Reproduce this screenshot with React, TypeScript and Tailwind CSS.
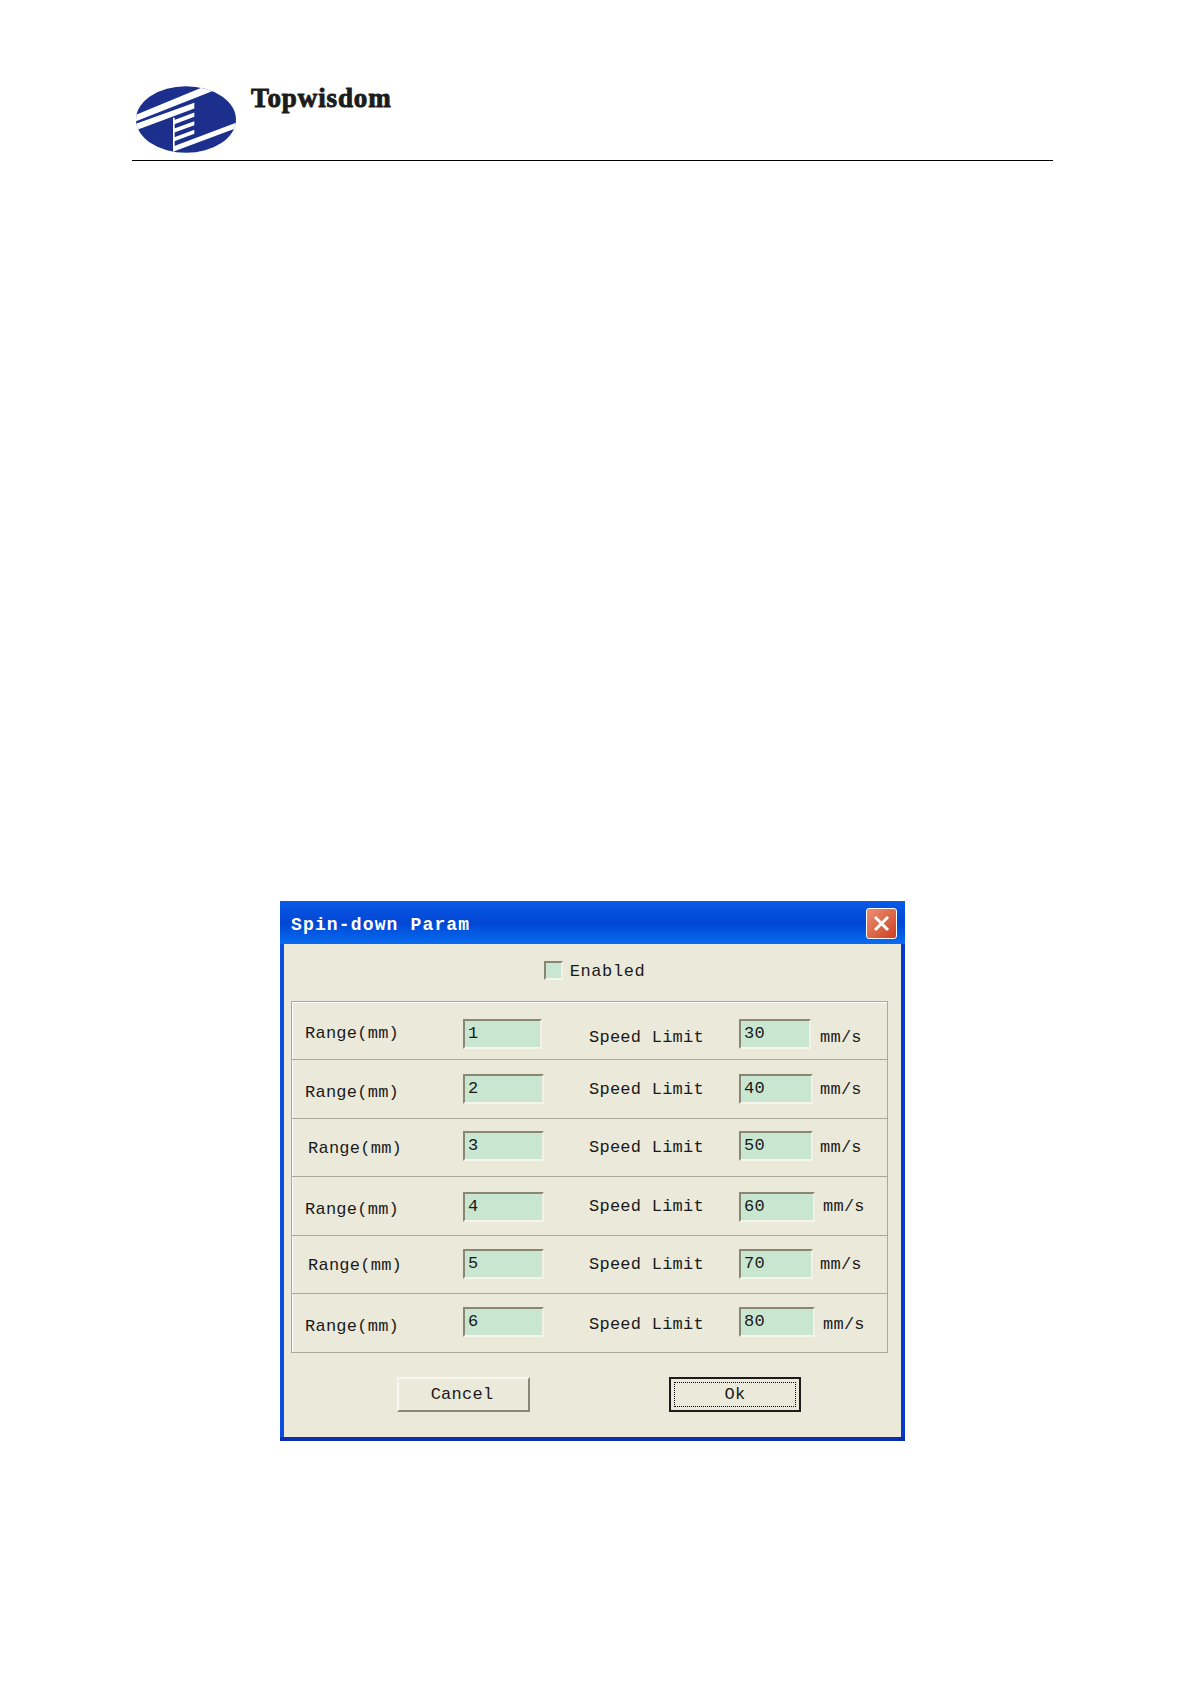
const rows = [
  { n: '1', v: '30', row: 'h-[57px]', label: 'ml-[13px] mt-[22px]', box: 'mt-[17px] w-[79px]', speed: 'mt-[26px]', box2: 'mt-[17px] w-[72px]', unit: 'ml-[9px] mt-[26px]' },
  { n: '2', v: '40', row: 'h-[59px]', label: 'ml-[13px] mt-[23px]', box: 'mt-[14px] w-[81px]', speed: 'mt-[20px]', box2: 'mt-[14px] w-[74px]', unit: 'ml-[7px] mt-[20px]' },
  { n: '3', v: '50', row: 'h-[58px]', label: 'ml-[16px] mt-[20px]', box: 'mt-[12px] w-[81px]', speed: 'mt-[19px]', box2: 'mt-[12px] w-[74px]', unit: 'ml-[7px] mt-[19px]' },
  { n: '4', v: '60', row: 'h-[59px]', label: 'ml-[13px] mt-[23px]', box: 'mt-[15px] w-[81px]', speed: 'mt-[20px]', box2: 'mt-[15px] w-[76px]', unit: 'ml-[8px] mt-[20px]' },
  { n: '5', v: '70', row: 'h-[58px]', label: 'ml-[16px] mt-[20px]', box: 'mt-[13px] w-[81px]', speed: 'mt-[19px]', box2: 'mt-[13px] w-[74px]', unit: 'ml-[7px] mt-[19px]' },
  { n: '6', v: '80', row: 'h-[59px]', label: 'ml-[13px] mt-[23px]', box: 'mt-[13px] w-[81px]', speed: 'mt-[21px]', box2: 'mt-[13px] w-[76px]', unit: 'ml-[8px] mt-[21px]' },
]

function Field ({ value, className }: { value: string, className: string }) {
  return (
    <div className={`h-[30px] bg-[#c9e6d0] border-2 border-t-[#8a8674] border-l-[#8a8674] border-r-[#f3f1e6] border-b-[#f6f5ec] pl-[3px] text-[17px] leading-[25px] ${className}`}>
      {value}
    </div>
  )
}

function Logo () {
  return (
    <svg width="100" height="67" viewBox="0 0 300 200" className="shrink-0 mt-[1px]">
      <defs>
        <clipPath id="logo-oval">
          <ellipse cx="150" cy="100" rx="150" ry="100" />
        </clipPath>
      </defs>
      <ellipse cx="150" cy="100" rx="150" ry="100" fill="#1c2f8c" />
      <g clipPath="url(#logo-oval)" fill="#fff">
        <path d="M0 86 L207 0 L232 14 L0 105 Z" />
        <path d="M0 113 L175 50 L175 67 L0 132 Z" />
        <path d="M113 102 L175 79 L175 92 L113 115 Z" />
        <path d="M113 128 L175 105 L175 117 L113 140 Z" />
        <path d="M113 154 L175 131 L175 143 L113 166 Z" />
        <path d="M113 180 L300 110 L300 126 L113 196 Z" />
        <path d="M111 95 L116 95 L116 196 L111 196 Z" />
      </g>
    </svg>
  )
}

export default function App () {
  return (
    <div className="min-h-[1684px] w-[1191px] bg-white font-['Liberation_Mono',monospace] text-[#1a1a1a] tracking-[0.25px]">
      <div className="pl-[132px] pt-[85px] w-[1053px]">
        <div className="flex border-b border-black h-[76px] pl-[4px]">
          <Logo />
          <div className="ml-[15px] font-['Liberation_Serif',serif] font-bold text-[27px] leading-[26px] tracking-[0.9px] text-[#1c1c1c] [-webkit-text-stroke:0.9px_#1c1c1c]">Topwisdom</div>
        </div>
      </div>

      <div className="ml-[280px] mt-[740px] w-[625px] h-[540px] bg-gradient-to-r from-[#0a4fe0] to-[#0a3ac8] border-b-4 border-[#0a2fae] flex flex-col">
        <div className="h-[43px] flex items-center pl-[11px] pr-[8px] bg-gradient-to-b from-[#0a5ae6] via-[#0246d4] to-[#0a6cf0]">
          <span className="mt-[5px] font-bold text-[18px] text-white tracking-[1.15px]">Spin-down Param</span>
          <div className="ml-auto mt-[2px] w-[31px] h-[31px] rounded-[3px] border border-white bg-gradient-to-br from-[#ec8f72] to-[#cf3b1c] flex items-center justify-center">
            <svg width="21" height="21" viewBox="0 0 21 21">
              <path d="M4 4 L17 17 M17 4 L4 17" stroke="#fff" strokeWidth="3" />
            </svg>
          </div>
        </div>

        <div className="mx-[4px] flex-1 bg-[#ebe9da] flex flex-col">
          <div className="h-[57px] flex items-center justify-center pl-[4px]">
            <div className="mb-[4px] w-[19px] h-[19px] bg-[#c9e6d0] border-2 border-t-[#8a8674] border-l-[#8a8674] border-r-[#f3f1e6] border-b-[#f6f5ec]" />
            <span className="ml-[7px] text-[17px] mb-[2px] tracking-[0.6px]">Enabled</span>
          </div>

          <div className="mx-[7px] w-[597px] border border-[#aca899] shadow-[inset_1px_1px_0_#fff]">
            {rows.map((r, i) => (
              <div key={r.n} className={`${r.row} grid grid-cols-[171px_126px_150px_1fr] items-start text-[17px] leading-[20px] ${i > 0 ? 'border-t border-[#aca899]' : ''}`}>
                <div className={r.label}>Range(mm)</div>
                <Field value={r.n} className={r.box} />
                <div className={r.speed}>Speed Limit</div>
                <div className="flex items-start">
                  <Field value={r.v} className={r.box2} />
                  <div className={r.unit}>mm/s</div>
                </div>
              </div>
            ))}
          </div>

          <div className="mt-[24px] flex">
            <button className="ml-[113px] w-[133px] h-[35px] bg-[#ebe9da] border-2 border-t-[#f7f6ee] border-l-[#f7f6ee] border-r-[#8a8674] border-b-[#8a8674] text-[17px] pr-[3px]">Cancel</button>
            <button className="ml-[139px] w-[132px] h-[35px] bg-[#ebe9da] border-2 border-[#1c1c1c] p-[3px] text-[17px] leading-[20px]">
              <span className="flex h-full items-center justify-center border border-dotted border-black">Ok</span>
            </button>
          </div>
        </div>
      </div>
    </div>
  )
}
